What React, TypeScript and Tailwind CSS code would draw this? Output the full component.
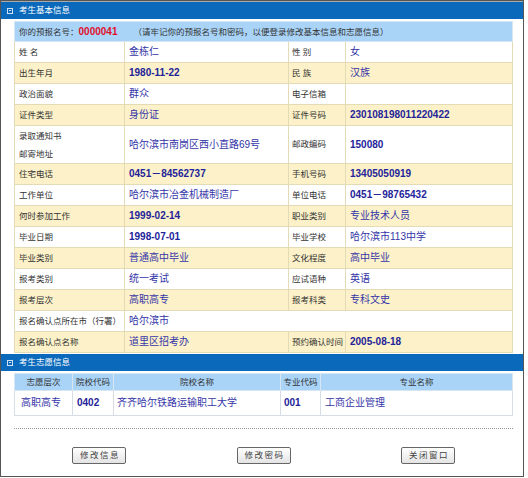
const font = { fontFamily: '"Liberation Sans", "Noto Sans CJK SC", sans-serif' };

type Cell = { v: string; num?: boolean };
type Row = { l1: string; v1: Cell; l2?: string; v2?: Cell; tall?: boolean };

const rows: Row[] = [
  { l1: "姓 名", v1: { v: "金栋仁" }, l2: "性 别", v2: { v: "女" } },
  { l1: "出生年月", v1: { v: "1980-11-22", num: true }, l2: "民 族", v2: { v: "汉族" } },
  { l1: "政治面貌", v1: { v: "群众" }, l2: "电子信箱", v2: { v: "" } },
  { l1: "证件类型", v1: { v: "身份证" }, l2: "证件号码", v2: { v: "230108198011220422", num: true } },
  { l1: "录取通知书\n邮寄地址", v1: { v: "哈尔滨市南岗区西小直路69号" }, l2: "邮政编码", v2: { v: "150080", num: true }, tall: true },
  { l1: "住宅电话", v1: { v: "0451－84562737", num: true }, l2: "手机号码", v2: { v: "13405050919", num: true } },
  { l1: "工作单位", v1: { v: "哈尔滨市冶金机械制造厂" }, l2: "单位电话", v2: { v: "0451－98765432", num: true } },
  { l1: "何时参加工作", v1: { v: "1999-02-14", num: true }, l2: "职业类别", v2: { v: "专业技术人员" } },
  { l1: "毕业日期", v1: { v: "1998-07-01", num: true }, l2: "毕业学校", v2: { v: "哈尔滨市113中学" } },
  { l1: "毕业类别", v1: { v: "普通高中毕业" }, l2: "文化程度", v2: { v: "高中毕业" } },
  { l1: "报考类别", v1: { v: "统一考试" }, l2: "应试语种", v2: { v: "英语" } },
  { l1: "报考层次", v1: { v: "高职高专" }, l2: "报考科类", v2: { v: "专科文史" } },
  { l1: "报名确认点所在市（行署）", v1: { v: "哈尔滨市" } },
  { l1: "报名确认点名称", v1: { v: "道里区招考办" }, l2: "预约确认时间", v2: { v: "2005-08-18", num: true } },
];

function Val({ c }: { c?: Cell }) {
  if (!c) return null;
  return (
    <span className={c.num ? "text-[10px] font-bold text-[#23239a]" : "text-[10px] text-[#3535a8]"}>{c.v}</span>
  );
}

function SectionBar({ title }: { title: string }) {
  return (
    <div className="flex h-[17px] items-center gap-[6px] bg-[#0a69bb] pl-[6px] text-[8.5px] leading-none text-white">
      <span className="flex h-[6px] w-[6px] items-center justify-center border border-[#cfe3f5]">
        <span className="h-[1px] w-[2px] bg-[#cfe3f5]" />
      </span>
      <span>{title}</span>
    </div>
  );
}

function Btn({ text }: { text: string }) {
  return (
    <button className="h-[17px] w-[54px] rounded-[2px] border border-[#666] bg-gradient-to-b from-white to-[#e4e4e4] pl-[2px] text-[8.5px] leading-none tracking-[1.5px] text-[#444]">
      {text}
    </button>
  );
}

const bd = "border border-[#e3dbb6]";

export default function App() {
  return (
    <div style={font} className="h-[478px] w-[528px] bg-white">
      <div className="h-[477px] w-[524px] border border-[#555] bg-white">
        <div className="border-t border-[#aaa]">
          <SectionBar title="考生基本信息" />
        </div>
        <div className="px-[13px] pt-[2px]">
          <table className="w-[499px] table-fixed border-collapse text-[8.5px] leading-none text-[#333]">
            <colgroup>
              <col className="w-[110px]" />
              <col className="w-[164px]" />
              <col className="w-[57px]" />
              <col />
            </colgroup>
            <tbody>
              <tr className="h-[20px] bg-[#a9d4f8]">
                <td colSpan={4} className="whitespace-nowrap border border-[#d8e6f2] px-[4px]">
                  你的预报名号：<span className="text-[10px] font-bold text-[#e0102a]">0000041</span>
                  <span className="ml-[16px]">（请牢记你的预报名号和密码，以便登录修改基本信息和志愿信息）</span>
                </td>
              </tr>
              {rows.map((r, i) => (
                <tr key={i} className={(i % 2 === 0 ? "bg-white" : "bg-[#fcf1c8]") + (r.tall ? " h-[38px]" : " h-[21px]")}>
                  <td className={"whitespace-pre-line px-[4px] leading-[18px] " + bd}>{r.l1}</td>
                  {r.l2 !== undefined ? (
                    <>
                      <td className={"whitespace-nowrap px-[4px] " + bd}><Val c={r.v1} /></td>
                      <td className={"whitespace-nowrap px-[3px] " + bd}>{r.l2}</td>
                      <td className={"whitespace-nowrap px-[4px] " + bd}><Val c={r.v2} /></td>
                    </>
                  ) : (
                    <td colSpan={3} className={"px-[4px] " + bd}><Val c={r.v1} /></td>
                  )}
                </tr>
              ))}
            </tbody>
          </table>
        </div>
        <div className="mt-[1px]">
          <SectionBar title="考生志愿信息" />
        </div>
        <div className="px-[13px] pt-[2px]">
          <table className="w-[499px] table-fixed border-collapse text-[8.5px] leading-none text-[#333]">
            <colgroup>
              <col className="w-[58px]" />
              <col className="w-[41px]" />
              <col className="w-[167px]" />
              <col className="w-[40px]" />
              <col />
            </colgroup>
            <tbody>
              <tr className="h-[17px] bg-[#a9d4f8] text-center">
                <td className="border border-[#d8e6f2]">志愿层次</td>
                <td className="border border-[#d8e6f2]">院校代码</td>
                <td className="border border-[#d8e6f2]">院校名称</td>
                <td className="border border-[#d8e6f2]">专业代码</td>
                <td className="border border-[#d8e6f2]">专业名称</td>
              </tr>
              <tr className="h-[25px] bg-white">
                <td className="border border-[#d8dde4] px-[6px]"><span className="text-[10px] text-[#3535a8]">高职高专</span></td>
                <td className="border border-[#d8dde4] px-[4px]"><span className="text-[10px] font-bold text-[#23239a]">0402</span></td>
                <td className="whitespace-nowrap border border-[#d8dde4] px-[3px]"><span className="text-[10px] text-[#3535a8]">齐齐哈尔铁路运输职工大学</span></td>
                <td className="border border-[#d8dde4] px-[3px]"><span className="text-[10px] font-bold text-[#23239a]">001</span></td>
                <td className="border border-[#d8dde4] px-[4px]"><span className="text-[10px] text-[#3535a8]">工商企业管理</span></td>
              </tr>
            </tbody>
          </table>
          <div className="mt-[12px] w-[499px] border-t border-dotted border-[#999]" />
          <div className="mt-[18px] flex w-[499px] justify-between px-[58px]">
            <Btn text="修改信息" />
            <Btn text="修改密码" />
            <Btn text="关闭窗口" />
          </div>
        </div>
      </div>
    </div>
  );
}
